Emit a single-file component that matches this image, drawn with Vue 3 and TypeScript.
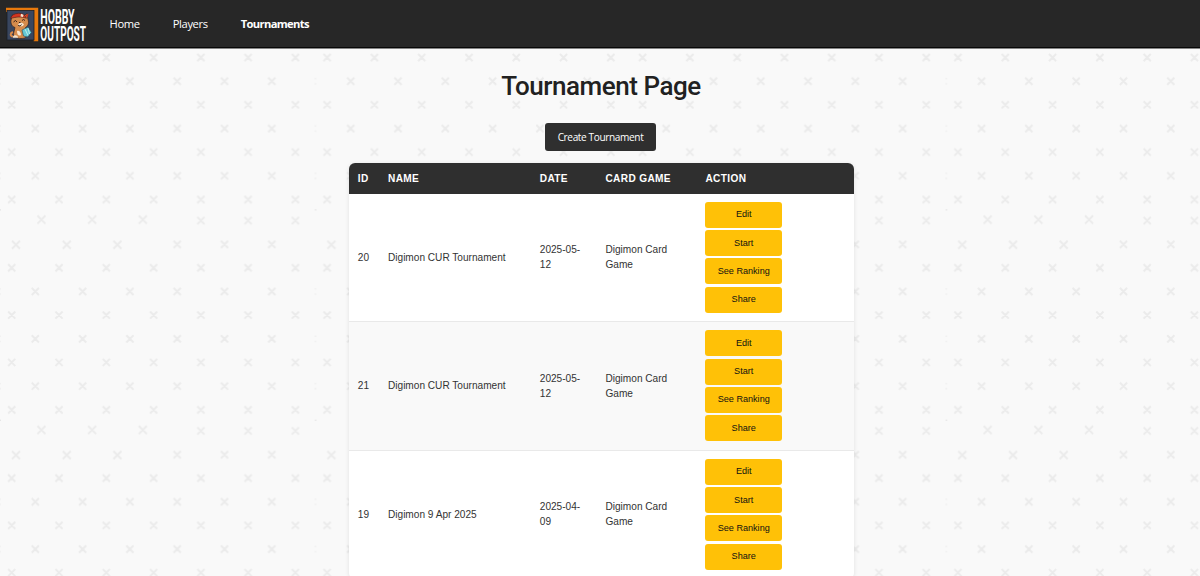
<script setup lang="ts">
interface Tournament {
  id: number
  name: string
  date: string
  game: string
}

const links: { label: string; active: boolean }[] = [
  { label: 'Home', active: false },
  { label: 'Players', active: false },
  { label: 'Tournaments', active: true },
]

const tournaments: Tournament[] = [
  { id: 20, name: 'Digimon CUR Tournament', date: '2025-05-12', game: 'Digimon Card Game' },
  { id: 21, name: 'Digimon CUR Tournament', date: '2025-05-12', game: 'Digimon Card Game' },
  { id: 19, name: 'Digimon 9 Apr 2025', date: '2025-04-09', game: 'Digimon Card Game' },
]

const actions: string[] = ['Edit', 'Start', 'See Ranking', 'Share']

// Cross centres inside one 315.43 x 210.3 background tile
const oddXs = [11.7, 59, 106.3, 153.6, 200.9, 248.1, 295.4]
const evenXs = [35.3, 82.6, 129.9, 177.2, 224.5, 271.8]
const crosses: { x: number; y: number; s: number }[] = []
for (const y of [58.4, 105.7, 153, 200.4]) for (const x of oddXs) crosses.push({ x, y, s: 3.6 })
for (const y of [82.1, 129.4, 176.7]) for (const x of evenXs) crosses.push({ x, y, s: 3.6 })
for (const x of [41.4, 92.1, 142.8]) crosses.push({ x, y: 10.3, s: 4 })
for (const x of [200.9, 248.1, 295.4]) crosses.push({ x, y: 11.2, s: 3.6 })
for (const x of [16, 66.8, 117.4]) crosses.push({ x, y: 35.4, s: 4 })
for (const x of [177.2, 224.5, 271.8]) crosses.push({ x, y: 35, s: 3.6 })
const crossPath = crosses
  .map(({ x, y, s }) => `M${x - s} ${y - s}l${2 * s} ${2 * s}M${x + s} ${y - s}l${-2 * s} ${2 * s}`)
  .join('')
const specks = [82.1, 129.4, 176.7].map((y) => `M314.9 ${y - 3.4}h1v1.6h-1zM314.9 ${y + 1.8}h1v1.6h-1zM0 ${y - 3.4}h.6v1.6h-.6zM0 ${y + 1.8}h.6v1.6h-.6z`).join('')
</script>

<template>
  <div class="page">
    <svg class="backdrop" width="1200" height="576" aria-hidden="true">
      <defs>
        <pattern id="crosses" width="315.43" height="210.3" y="-0.9" patternUnits="userSpaceOnUse">
          <path :d="crossPath" stroke="#ebebeb" stroke-width="2" fill="none" />
          <path :d="specks" fill="#ebebeb" />
          <path d="M0 0h.8v.8h-.8zM315 0h.4v.8h-.4z" fill="#ccc" />
        </pattern>
      </defs>
      <rect width="1200" height="576" fill="url(#crosses)" />
    </svg>

    <header class="navbar">
      <svg class="logo" width="84" height="47" viewBox="4 0 84 47">
        <path d="M6 7.8h32.2v33.4h-4.5V12H6z" fill="#e8790c" />
        <rect x="7" y="10.5" width="27" height="29.5" fill="#39465f" stroke="#1b1e27" stroke-width=".8" />
        <path d="M13 32c-3 1-3 4 0 4.500" stroke="#d98a4a" stroke-width="2" fill="none" />
        <path d="M11.500 18.500l1-3.500 4 1.500h6l4.500-3 1 6c1.500 4-.5 7-2.500 8l2 6c0 4-3 5-6.500 5s-8-1-7.500-5l1.500-6c-3.500-1-5-5-3.500-9z" fill="#d58b4c" stroke="#33211e" stroke-width=".7" />
        <path d="M10.500 18.500c1-3.500 4-5 8-5.200s7 2 8 5c-5-2-10-1.500-16 .2z" fill="#d3351f" stroke="#421c1c" stroke-width=".6" />
        <path d="M25 15.500l3.500-2-1 4z" fill="#d3351f" />
        <path d="M18 24.500c1.500-2 4.500-2.500 6 0-1 2.500-5 2.500-6 0zM17 31c2-1 4 1 4 4-2 1.500-4 0-4-4zM21 13.800l2.500 1-.5 2.200-2.500-.5z" fill="#f7e6d1" />
        <path d="M13.500 22l2-1.500 1.500 1.500M22 20.500l1.500-1 1.500 1M19 22.500h1.500M18 25c1 1.500 3 1 3.500-.5" stroke="#2b1714" stroke-width=".9" fill="none" />
        <path d="M22 30l6-3 3.500 5.500-4 4.500-4-1z" fill="#65c9d5" stroke="#214c60" stroke-width=".6" />
        <path d="M25 29l3 6.500M28 28l1.500 6" stroke="#d2f4f4" stroke-width=".8" />
        <path d="M13 36.500c1-2 5-1.500 5 1.200h-5z" fill="#f4e4ce" />
        <g transform="translate(40.300 0) scale(.52 1)">
          <text x="0" y="24" font-size="19.5" textLength="66" lengthAdjust="spacingAndGlyphs">HOBBY</text>
          <text x="0" y="40.700" font-size="19.5" textLength="88" lengthAdjust="spacingAndGlyphs">OUTPOST</text>
        </g>
      </svg>
      <nav class="links">
        <a v-for="link in links" :key="link.label" :class="{ active: link.active }">{{ link.label }}</a>
      </nav>
    </header>

    <main class="content">
      <h1>Tournament Page</h1>
      <button class="create">Create Tournament</button>
      <div class="table">
        <div class="row head">
          <span>ID</span><span>NAME</span><span>DATE</span><span>CARD GAME</span><span>ACTION</span>
        </div>
        <div v-for="t in tournaments" :key="t.id" class="row">
          <span>{{ t.id }}</span>
          <span>{{ t.name }}</span>
          <span class="date">{{ t.date }}</span>
          <span class="game">{{ t.game }}</span>
          <div class="actions">
            <button v-for="a in actions" :key="a">{{ a }}</button>
          </div>
        </div>
      </div>
    </main>
  </div>
</template>

<style>
body {
  margin: 0;
  background: #f9f9f9;
  overflow: hidden;
}
</style>

<style scoped>
.page {
  position: relative;
  height: 576px;
  overflow: hidden;
  background: #f9f9f9;
  font-family: "Liberation Sans", Arial, sans-serif;
}
.backdrop {
  position: absolute;
  inset: 0;
}
.navbar {
  position: relative;
  box-sizing: border-box;
  height: 48px;
  display: flex;
  align-items: center;
  padding-left: 4px;
  background: #272727;
  border-bottom: 1px solid #080808;
  box-shadow: 0 1px 0 #858585;
}
.logo {
  flex: none;
}
.logo text {
  font-family: Roboto, sans-serif;
  font-weight: 700;
  fill: #fff;
}
.links {
  display: flex;
  gap: 33px;
  margin-left: 21.5px;
  padding-top: 1px;
  font: 11.2px/16px "Open Sans", sans-serif;
  letter-spacing: -0.36px;
  color: #fff;
}
.links .active {
  font-weight: 700;
  letter-spacing: -0.66px;
}
.content {
  position: relative;
  display: flex;
  flex-direction: column;
  align-items: center;
  padding-top: 20px;
  margin-left: 2px;
}
h1 {
  margin: 0;
  font: 500 26px/36px Roboto, sans-serif;
  letter-spacing: -0.46px;
  color: #212121;
}
.create {
  width: 110.500px;
  height: 27.500px;
  margin: 19px 1px 12.500px 0;
  padding: 1px 0 0;
  border: 0;
  border-radius: 3px;
  background: #2f2f2f;
  color: #fff;
  font: 10.1px/15px "Open Sans", sans-serif;
  letter-spacing: -0.38px;
}
.table {
  width: 505px;
  border-radius: 6px;
  overflow: hidden;
  background: #fff;
  box-shadow: 0 1px 4px rgba(0, 0, 0, 0.1);
}
.row {
  box-sizing: border-box;
  height: 128.500px;
  display: grid;
  grid-template-columns: 30.200px 151.800px 65.700px 100px 1fr;
  align-items: center;
  padding-left: 9.300px;
  border-bottom: 1px solid #e9e9e9;
  font-size: 10.1px;
  line-height: 15.1px;
  color: #333;
}
.row:nth-child(odd) {
  background: #f9f9f9;
}
.row.head {
  height: 30.500px;
  border: 0;
  background: #2f2f2f;
  color: #fff;
  font-weight: 700;
  letter-spacing: 0.36px;
}
.date {
  width: 48px;
}
.game {
  width: 75px;
}
.actions {
  display: flex;
  flex-direction: column;
  gap: 2.200px;
  width: 76.500px;
}
.actions button {
  height: 26px;
  padding: 0;
  border: 0;
  border-radius: 3px;
  background: #ffc107;
  color: #111;
  font: 9.1px/13px "Liberation Sans", Arial, sans-serif;
}
</style>
